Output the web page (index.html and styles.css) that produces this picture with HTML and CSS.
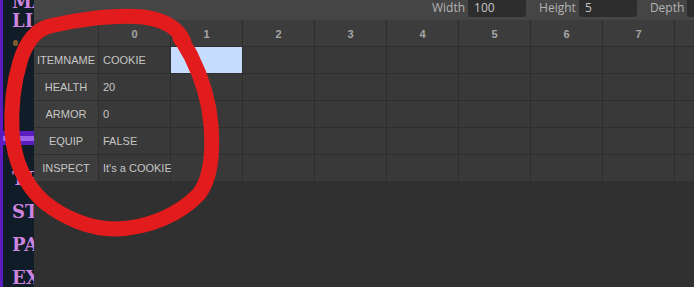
FILE: index.html
```html
<!DOCTYPE html>
<html lang="en">
<head>
  <meta charset="UTF-8">
  <meta name="viewport" content="width=device-width, initial-scale=1.0">
  <title>Item Table Editor</title>
  <link rel="stylesheet" href="styles.css">
</head>
<body>
  <div class="app">
    <aside class="side">
      <div class="side-line top">MA</div>
      <div class="side-line second">LI</div>
      <div class="side-icon"></div>
      <div class="side-band"></div>
      <div class="side-line first">TE</div>
      <div class="side-line">ST</div>
      <div class="side-line">PA</div>
      <div class="side-line">EX</div>
    </aside>

    <main class="editor">
      <div class="toolbar">
        <label class="dim">Width <span class="field">100</span></label>
        <label class="dim">Height <span class="field">5</span></label>
        <label class="dim">Depth <span class="field">1</span></label>
      </div>

      <div class="sheet" id="sheet"></div>
    </main>
  </div>

  <svg class="scribble" width="694" height="287" viewBox="0 0 694 287">
    <path d="M 184 42 C 178 28, 166 20, 143 17 C 115 14, 75 20, 50 26 C 34 30, 25 45, 20 62 C 13 85, 11 110, 12 132 C 14 160, 24 184, 44 202 C 64 218, 90 229, 115 229 C 150 228, 180 214, 199 194 C 212 177, 213 150, 211 125 C 209 100, 201 76, 191 56 C 187 49, 185 45, 180 38"/>
  </svg>

  <script>
    // item record shown in the first data column
    const rows = [
      ['ITEMNAME', 'COOKIE'],
      ['HEALTH', '20'],
      ['ARMOR', '0'],
      ['EQUIP', 'FALSE'],
      ['INSPECT', "It's a COOKIE"]
    ];
    const columns = 9;
    const sheet = document.getElementById('sheet');

    function addCell(text, className) {
      const cell = document.createElement('div');
      cell.className = 'cell ' + className;
      cell.textContent = text;
      sheet.appendChild(cell);
    }

    // header row
    addCell('', 'corner');
    for (let c = 0; c < columns; c++) {
      addCell(String(c), 'head');
    }

    // data rows
    rows.forEach((row, r) => {
      addCell(row[0], 'label');
      for (let c = 0; c < columns; c++) {
        const value = c === 0 ? row[1] : '';
        const selected = r === 0 && c === 1;
        addCell(value, selected ? 'data selected' : 'data');
      }
    });
  </script>
</body>
</html>
```

FILE: styles.css
```css
body {
  margin: 0;
  width: 694px;
  height: 287px;
  overflow: hidden;
  background-color: #303030;
  font-family: "Liberation Sans", Arial, sans-serif;
}
.app {
  display: flex;
  height: 287px;
}
.side {
  width: 34px;
  flex-shrink: 0;
  overflow: hidden;
  background-color: #101c28;
  border-left: 3px solid #5b1bc0;
  box-sizing: border-box;
  padding-left: 9px;
  font-family: "DejaVu Serif", serif;
  font-weight: bold;
  font-size: 18px;
  color: #cc84de;
  white-space: nowrap;
}
.side-line {
  height: 33px;
  line-height: 33px;
}
.side-line.top {
  height: 14px;
  line-height: 14px;
  margin-top: -5px;
}
.side-line.second {
  margin-top: -5px;
}
.side-line.first {
  margin-top: 17px;
}
.side-icon {
  width: 5px;
  height: 6px;
  margin-top: 3px;
  margin-left: 1px;
  background-color: #7a5a2a;
  border-radius: 2px;
}
.side-band {
  height: 14px;
  margin-top: 85px;
  margin-left: -12px;
  border-top: 5px solid #5a1ec0;
  border-bottom: 4px solid #5a1ec0;
  background-color: #9a62e8;
  box-sizing: border-box;
}
.editor {
  flex: 1;
  overflow: hidden;
  background-color: #303030;
}
.toolbar {
  height: 20px;
  background-color: #454545;
  display: flex;
  gap: 13px;
  padding-left: 398px;
  white-space: nowrap;
  font-family: "Open Sans", sans-serif;
  font-size: 12px;
  color: #b4b4b4;
}
.dim {
  display: flex;
  align-items: flex-start;
  gap: 3px;
  line-height: 15px;
}
.field {
  display: block;
  width: 52px;
  height: 17px;
  padding-left: 6px;
  background-color: #2d2d2d;
  border-radius: 0 0 3px 3px;
  color: #c4c4c4;
}
.sheet {
  display: grid;
  grid-template-columns: 64px repeat(9, 71px);
  grid-auto-rows: 26px;
  gap: 1px;
  width: max-content;
  background-color: #2e2e2e;
}
.cell {
  display: flex;
  align-items: center;
  font-size: 11px;
  color: #c6c6c6;
  white-space: nowrap;
}
.corner, .head {
  background-color: #3c3c3c;
}
.head {
  justify-content: center;
  font-weight: bold;
  color: #a6a6a6;
  padding-top: 1px;
}
.label {
  justify-content: center;
  background-color: #3d3d3d;
}
.data {
  padding-left: 4px;
  background-color: #393939;
}
.selected {
  background-color: #c6ddff;
}
.scribble {
  position: absolute;
  left: 0;
  top: 0;
  pointer-events: none;
}
.scribble path {
  fill: none;
  stroke: #e21c1c;
  stroke-width: 15;
  stroke-linecap: round;
  stroke-linejoin: round;
}
```
